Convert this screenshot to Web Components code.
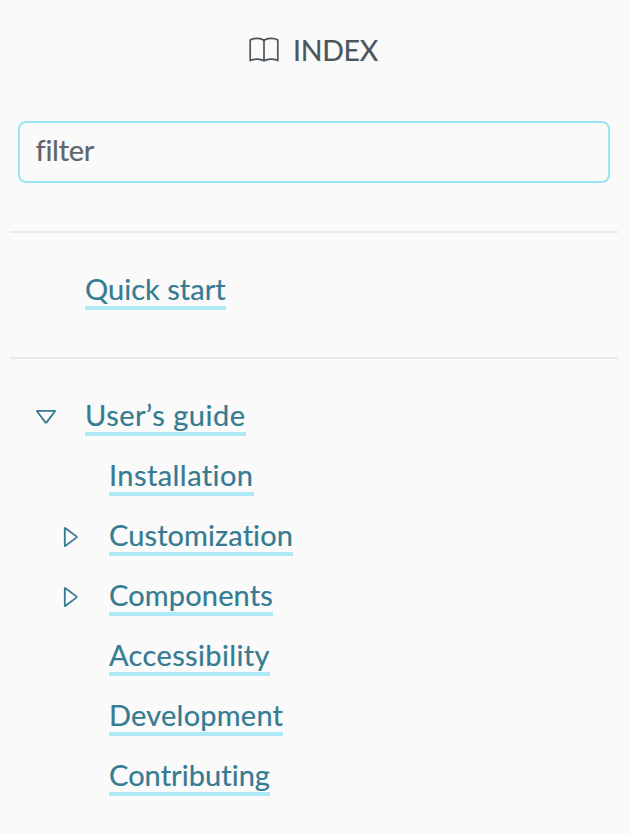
<!DOCTYPE html>
<html lang="en">
<head>
<meta charset="utf-8">
<title>Index</title>
<style>
html, body { margin: 0; background: #fafafa; }
body { font: 29px/40px Lato, "Open Sans", sans-serif; color: #4d555c; }
</style>
</head>
<body>
<index-panel></index-panel>
<script>
const define = (name, html, setup) => customElements.define(name, class extends HTMLElement {
  connectedCallback() {
    if (this.shadowRoot) return;
    const t = document.createElement('template');
    t.innerHTML = html;
    this.attachShadow({ mode: 'open' }).append(t.content.cloneNode(true));
    if (setup) setup(this, this.shadowRoot);
  }
});

// Spreads the letters of a label so that it takes up the width in its "w" attribute.
define('fit-text', `<style>
:host { display: block; white-space: nowrap; }
span { display: inline-block; font-variant-ligatures: none; -webkit-text-stroke: 0.2px currentColor; }
</style><span><slot></slot></span>`, (el, root) => {
  const span = root.querySelector('span');
  const want = parseFloat(el.getAttribute('w'));
  const have = span.getBoundingClientRect().width;
  span.style.letterSpacing = ((want - have) / el.textContent.length) + 'px';
  el.style.width = want + 'px';
});

define('book-icon', `<style>:host { display: block; width: 32px; height: 28px; } svg { display: block; }</style>
<svg width="32" height="28" viewBox="0 0 32 28" fill="none" stroke="#4d555c" stroke-width="1.7" stroke-linejoin="round" stroke-linecap="round">
<path d="M16 4.2C12.6 1.9 5.8 1.8 2.2 4V24.6C6 22.7 12.4 22.7 16 24.8C19.6 22.7 26 22.7 29.8 24.6V4C26.2 1.8 19.4 1.9 16 4.2ZM16 4.2V24.8"/></svg>`);

define('index-title', `<style>
:host { display: flex; height: 121px; padding: 30px 0 0 248px; box-sizing: border-box; font-size: 28.5px; }
book-icon { margin-top: 6px; }
fit-text { margin: 0 0 0 13px; }
</style><book-icon></book-icon><fit-text><slot></slot></fit-text>`, (el, root) => {
  root.querySelector('fit-text').style.letterSpacing = '-0.3px';
});

define('filter-box', `<style>
:host { display: block; height: 62px; margin: 0 20px 0 18px; padding: 7px 15.5px; box-sizing: border-box; border: 2px solid #9be3f6; border-radius: 8px; color: #5e656b; letter-spacing: -0.25px; }
</style><fit-text><slot></slot></fit-text>`);

define('nav-section', `<style>
:host { display: block; margin: 0 12px 0 10px; border-top: 2px solid #e9e9ed; padding: 27px 0 37px; }
</style><slot></slot>`);

define('toggle-arrow', `<style>
:host { display: block; width: 24px; height: 24px; }
svg { display: block; }
:host([open]) svg { transform: rotate(90deg); }
</style><svg width="24" height="24" viewBox="0 0 24 24" fill="none" stroke="#357b91" stroke-width="1.8" stroke-linejoin="round"><path d="M5.8 3.3Q5.8 2.6 6.5 3.2L17.4 11.4Q18.1 12 17.4 12.6L6.5 20.8Q5.8 21.4 5.8 20.7Z"/></svg>`);

define('index-panel', `<style>
:host { display: block; height: 834px; overflow: hidden; }
filter-box { margin-bottom: 48px; }
.item { display: flex; height: 60px; box-sizing: border-box; padding-left: 24px; }
.item.nested { padding-left: 48px; }
.mark { width: 51px; padding-top: 19px; box-sizing: border-box; }
.nested .mark { padding-left: 1px; }
a { display: block; height: 50px; box-sizing: border-box; padding-top: 9px; border-bottom: 4px solid #afe9f8; color: #357b91; text-decoration: none; line-height: 40px; }
</style>
<index-title>INDEX</index-title>
<filter-box>filter</filter-box>
<nav-section>
<div class="item"><div class="mark"></div><a href="#"><fit-text w="140.7">Quick start</fit-text></a></div>
</nav-section>
<nav-section>
<div class="item"><div class="mark"><toggle-arrow open></toggle-arrow></div><a href="#"><fit-text w="160.5">User’s guide</fit-text></a></div>
<div class="item nested"><div class="mark"></div><a href="#"><fit-text w="144.5">Installation</fit-text></a></div>
<div class="item nested"><div class="mark"><toggle-arrow></toggle-arrow></div><a href="#"><fit-text w="184">Customization</fit-text></a></div>
<div class="item nested"><div class="mark"><toggle-arrow></toggle-arrow></div><a href="#"><fit-text w="164">Components</fit-text></a></div>
<div class="item nested"><div class="mark"></div><a href="#"><fit-text w="160.8">Accessibility</fit-text></a></div>
<div class="item nested"><div class="mark"></div><a href="#"><fit-text w="174.2">Development</fit-text></a></div>
<div class="item nested"><div class="mark"></div><a href="#"><fit-text w="161">Contributing</fit-text></a></div>
</nav-section>`);
</script>
</body>
</html>
